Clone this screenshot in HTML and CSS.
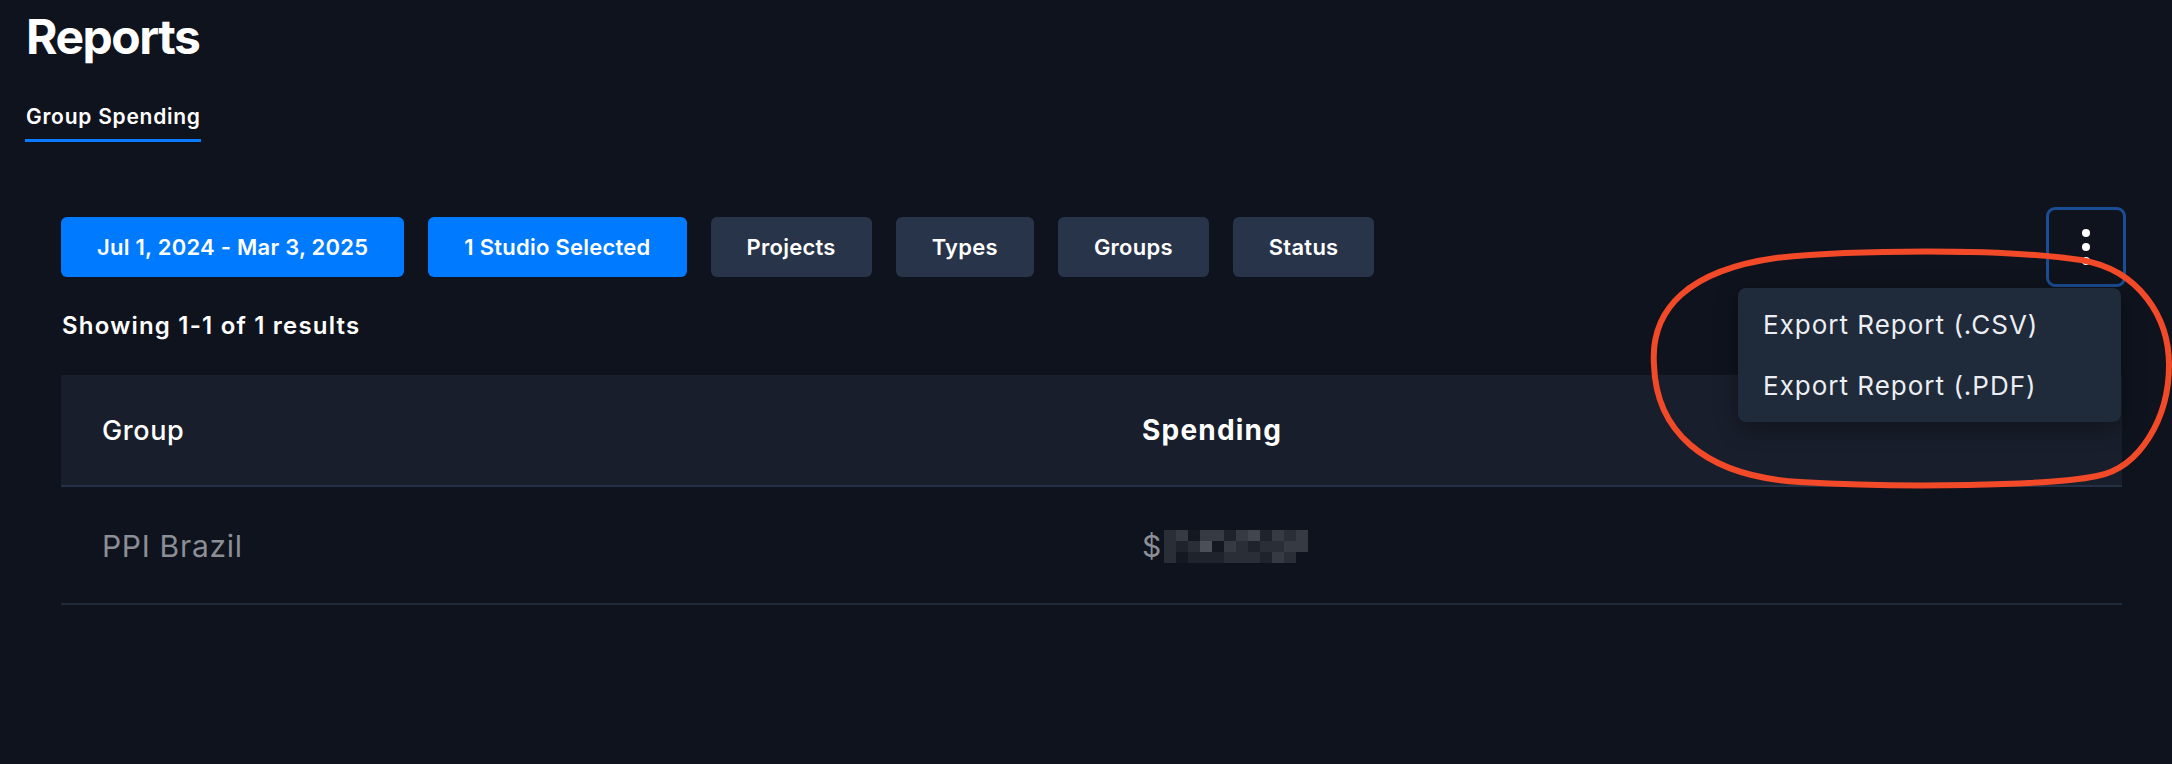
FILE: index.html
```html
<!DOCTYPE html>
<html lang="en">
<head>
<meta charset="utf-8">
<title>Reports</title>
<link rel="stylesheet" href="styles.css">
</head>
<body>
<div class="page">
  <header class="page-head">
    <h1 class="title">Reports</h1>
    <nav class="tabs">
      <a class="tab tab-active">Group Spending</a>
    </nav>
  </header>

  <main class="content">
    <div class="toolbar">
      <div class="filters">
        <button class="chip chip-primary">Jul 1, 2024 - Mar 3, 2025</button>
        <button class="chip chip-primary">1 Studio Selected</button>
        <button class="chip">Projects</button>
        <button class="chip">Types</button>
        <button class="chip">Groups</button>
        <button class="chip">Status</button>
      </div>
      <div class="more-wrap">
        <button class="more" aria-label="More options">
          <span class="dot"></span><span class="dot"></span><span class="dot"></span>
        </button>
        <div class="menu">
          <div class="menu-item">Export Report (.CSV)</div>
          <div class="menu-item">Export Report (.PDF)</div>
        </div>
      </div>
    </div>

    <p class="summary">Showing 1-1 of 1 results</p>

    <div class="table">
      <div class="thead">
        <div class="th">Group</div>
        <div class="th th-strong">Spending</div>
      </div>
      <div class="tr">
        <div class="td">PPI Brazil</div>
        <div class="td td-money">$<span class="mosaic">
          <i class="m2"></i><i class="m3"></i><i class="m0"></i><i class="m3"></i><i class="m3"></i><i class="m1"></i><i class="m3"></i><i class="m4"></i><i class="m1"></i><i class="m3"></i><i class="m2"></i><i class="m3"></i>
          <i class="m2"></i><i class="m1"></i><i class="m2"></i><i class="m5"></i><i class="m0"></i><i class="m3"></i><i class="m2"></i><i class="m1"></i><i class="m2"></i><i class="m2"></i><i class="m3"></i><i class="m3"></i>
          <i class="m2"></i><i class="m0"></i><i class="m1"></i><i class="m1"></i><i class="m1"></i><i class="m2"></i><i class="m2"></i><i class="m2"></i><i class="m1"></i><i class="m3"></i><i class="m2"></i><i class="mx"></i>
        </span></div>
      </div>
    </div>
  </main>

  <svg class="annotation" width="2172" height="764" viewBox="0 0 2172 764" aria-hidden="true">
    <path d="M 1654 357 C 1650 300, 1690 262, 1776 250 C 1850 242, 2000 240, 2081 252 C 2140 262, 2169 310, 2169 357 C 2169 410, 2140 460, 2097 468 C 2050 478, 1900 480, 1800 474 C 1700 468, 1656 420, 1654 357 Z" fill="none" stroke="#f24a28" stroke-width="6" stroke-linejoin="round"/>
  </svg>
</div>
</body>
</html>
```

FILE: styles.css
```css
* { box-sizing: border-box; }

html, body {
  margin: 0;
  padding: 0;
  background: #0f131d;
}

body {
  font-family: "Inter", "Noto Sans", "Liberation Sans", sans-serif;
  color: #ffffff;
  width: 2172px;
  height: 764px;
  overflow: hidden;
}

.page {
  position: relative;
  width: 2172px;
  height: 764px;
}

/* Header */
.page-head {
  padding-left: 26px;
}

.title {
  margin: 8px 0 0;
  font-size: 48px;
  line-height: 58px;
  font-weight: 700;
  letter-spacing: -1.5px;
}

.tabs {
  display: flex;
  margin-top: 39px;
}

.tab {
  display: block;
  font-size: 21px;
  line-height: 24px;
  font-weight: 600;
  letter-spacing: 0.75px;
  padding-bottom: 10px;
  border-bottom: 3px solid #0a7bff;
  color: #ffffff;
  margin-left: -1px;
  padding-left: 1px;
  padding-right: 0;
}

/* Content */
.content {
  padding: 0 50px 0 61px;
  margin-top: 65px;
}

.toolbar {
  display: flex;
  align-items: center;
  justify-content: space-between;
  height: 80px;
}

.filters {
  display: flex;
  gap: 24px;
}

.chip {
  height: 60px;
  padding: 0 36px;
  border: 0;
  border-radius: 6px;
  background: #283449;
  color: #ffffff;
  font-family: inherit;
  font-size: 22px;
  font-weight: 600;
  letter-spacing: 0.25px;
}

.chip-primary {
  background: #007aff;
}

.more-wrap {
  position: relative;
  margin-right: -4px;
}

.more {
  width: 80px;
  height: 80px;
  border: 3px solid #1a4d93;
  border-radius: 9px;
  background: transparent;
  display: flex;
  flex-direction: column;
  align-items: center;
  justify-content: center;
  gap: 6px;
  padding: 0;
}

.dot {
  width: 8px;
  height: 8px;
  border-radius: 50%;
  background: #ffffff;
}

.menu {
  position: absolute;
  top: 81px;
  right: 5px;
  width: 383px;
  padding: 6px 0;
  background: #1f2a3b;
  border-radius: 8px;
  box-shadow: 0 6px 22px rgba(0, 0, 0, 0.35);
  z-index: 5;
}

.menu-item {
  height: 61px;
  line-height: 61px;
  padding-left: 25px;
  font-size: 26px;
  font-weight: 400;
  letter-spacing: 1px;
  color: #eceef2;
  white-space: nowrap;
}

.summary {
  margin: 25px 0 0 1px;
  font-size: 24px;
  line-height: 28px;
  font-weight: 600;
  letter-spacing: 1.2px;
}

/* Table */
.table {
  margin-top: 35px;
}

.thead,
.tr {
  display: grid;
  grid-template-columns: 1040px 1fr;
  align-items: center;
}

.thead {
  height: 112px;
  background: #181e2b;
  border-bottom: 2px solid #243043;
}

.tr {
  height: 118px;
  border-bottom: 2px solid #1f2a3a;
}

.th,
.td {
  padding-left: 41px;
}

.th {
  font-size: 27px;
  font-weight: 500;
  letter-spacing: 0.6px;
  color: #ffffff;
}

.th-strong {
  font-size: 28px;
  font-weight: 700;
  letter-spacing: 1.2px;
}

.td {
  font-size: 30px;
  font-weight: 400;
  letter-spacing: 0.7px;
  color: #8b8e95;
  padding-top: 2px;
}

.td-money {
  display: flex;
  align-items: center;
}

.mosaic {
  display: inline-grid;
  grid-template-columns: repeat(12, 12px);
  grid-auto-rows: 11px;
  margin-left: 2px;
}

.mosaic i { display: block; }
.m0 { background: #141821; }
.m1 { background: #1f232c; }
.m2 { background: #2a2e37; }
.m3 { background: #363a43; }
.m4 { background: #41454e; }
.m5 { background: #4b4f58; }
.mx { background: transparent; }

.annotation {
  position: absolute;
  top: 0;
  left: 0;
  pointer-events: none;
  z-index: 10;
}
```
